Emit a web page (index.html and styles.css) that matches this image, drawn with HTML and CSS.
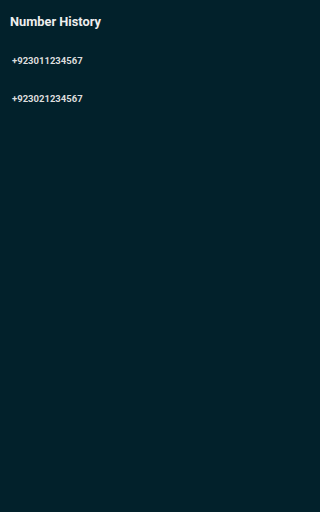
FILE: index.html
```html
<!DOCTYPE html>
<html>
<head>
<meta charset="utf-8">
<link rel="stylesheet" href="styles.css">
</head>
<body>
<div class="screen">
  <h1 class="title">Number History</h1>
  <ul class="list">
    <li class="item">+923011234567</li>
    <li class="item">+923021234567</li>
  </ul>
</div>
</body>
</html>
```
FILE: styles.css
```css
html, body {
  margin: 0;
  padding: 0;
  background: #02212b;
}
.screen {
  width: 244px;
  height: 512px;
  background: #02212b;
  font-family: Roboto, "Liberation Sans", sans-serif;
}
.title {
  margin: 0;
  padding: 14px 0 0 10px;
  font-size: 12.8px;
  font-weight: 700;
  color: #eeeeee;
  line-height: 16px;
}
.list {
  list-style: none;
  margin: 0;
  padding: 25px 0 0 12px;
  display: flex;
  flex-direction: column;
  gap: 26px;
}
.item {
  font-size: 9.5px;
  font-weight: 700;
  line-height: 12px;
  color: #dddddd;
}
```
